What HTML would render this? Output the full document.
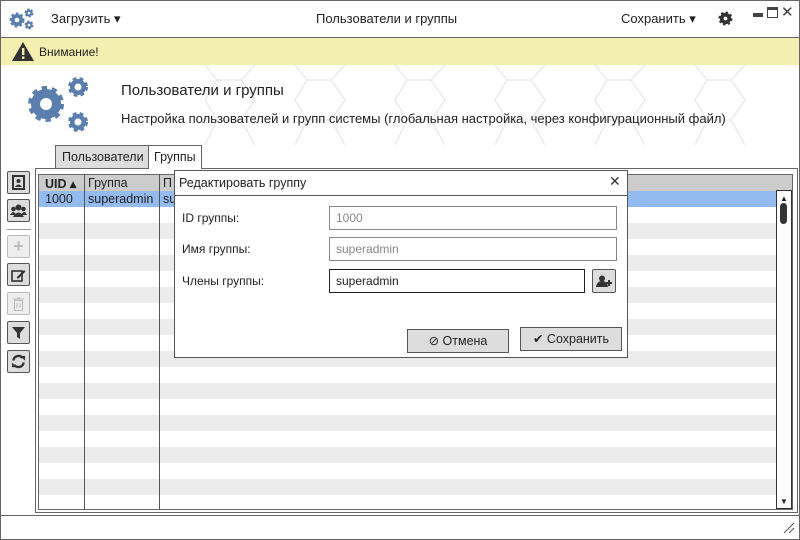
<!DOCTYPE html>
<html><head><meta charset="utf-8"><style>
*{box-sizing:border-box;margin:0;padding:0}
body{width:800px;height:540px;position:relative;background:#fff;font-family:"Liberation Sans",sans-serif;font-size:12px;color:#222;overflow:hidden}
.a{position:absolute}
.btn{position:absolute;left:7px;width:23px;height:23px;border:1px solid #555;border-radius:2px;background:#ddd;display:flex;align-items:center;justify-content:center}
.dis{border-color:#bbb;background:#eee;color:#bbb}
.inp{position:absolute;left:329px;width:288px;height:24px;border:1px solid #888;padding:4px 6px;color:#888;font-size:12px}
.lbl{position:absolute;left:182px;font-size:12px}
</style></head><body>
<div class="a" style="left:0;top:0;width:800px;height:540px;border:1px solid #666"></div>
<svg class="a" style="left:8px;top:7px" width="28" height="24" viewBox="0 0 28 24"><g fill="#5a7fae"><circle cx="9" cy="13" r="6" stroke="#5a7fae" stroke-width="3" stroke-dasharray="2.5 2"/><circle cx="21" cy="6" r="3.5" stroke="#5a7fae" stroke-width="2" stroke-dasharray="2 1.7"/><circle cx="21" cy="18" r="3.5" stroke="#5a7fae" stroke-width="2" stroke-dasharray="2 1.7"/></g><g fill="#fff"><circle cx="9" cy="13" r="2.3"/><circle cx="21" cy="6" r="1.3"/><circle cx="21" cy="18" r="1.3"/></g></svg>
<div class="a" style="left:51px;top:11px;font-size:13px">Загрузить ▾</div>
<div class="a" style="left:316px;top:11px;font-size:13px">Пользователи и группы</div>
<div class="a" style="left:621px;top:11px;font-size:13px">Сохранить ▾</div>
<svg class="a" style="left:718px;top:11px" width="15" height="15" viewBox="0 0 16 16"><circle cx="8" cy="8" r="6" fill="#333" stroke="#333" stroke-width="3" stroke-dasharray="2.4 2.3"/><circle cx="8" cy="8" r="2" fill="#fff"/></svg>
<div class="a" style="left:753px;top:13px;width:10px;height:4px;background:#444"></div>
<div class="a" style="left:767px;top:7px;width:11px;height:11px;border:1px solid #444;border-top-width:3px"></div>
<div class="a" style="left:781px;top:3px;font-size:15px;color:#444">✕</div>
<div class="a" style="left:0;top:37px;width:800px;height:1px;background:#666"></div>
<div class="a" style="left:1px;top:38px;width:798px;height:27px;background:#f3efb0"></div>
<svg class="a" style="left:11px;top:41px" width="24" height="21" viewBox="0 0 24 21"><path d="M12 1L23 20H1Z" fill="#333"/><rect x="11" y="7" width="2.4" height="7" fill="#f3efb0"/><rect x="11" y="15.5" width="2.4" height="2.4" fill="#f3efb0"/></svg>
<div class="a" style="left:39px;top:45px;font-size:12px">Внимание!</div>
<svg class="a" style="left:195px;top:65px" width="605" height="80"><g fill="none" stroke="#e2e2e2" stroke-width="1"><path d="M10 0l12 15-12 20 12 20-12 25M60 0l-14 15 14 20-14 20 14 25M100 0l12 15-12 20 12 20-12 25M150 0l-14 15 14 20-14 20 14 25M200 0l12 15-12 20 12 20-12 25M250 0l-14 15 14 20-14 20 14 25M300 0l12 15-12 20 12 20-12 25M350 0l-14 15 14 20-14 20 14 25M400 0l12 15-12 20 12 20-12 25M450 0l-14 15 14 20-14 20 14 25M500 0l12 15-12 20 12 20-12 25M550 0l-14 15 14 20-14 20 14 25M22 15h24M112 15h24M212 15h24M312 15h24M412 15h24M512 15h24M22 55h24M112 55h24M212 55h24M312 55h24M412 55h24M512 55h24"/></g></svg>
<svg class="a" style="left:26px;top:74px" width="66" height="62" viewBox="0 0 66 62"><g fill="#5a7fae"><circle cx="20" cy="30" r="15" stroke="#5a7fae" stroke-width="6" stroke-dasharray="5 4.5"/><circle cx="52" cy="13" r="8" stroke="#5a7fae" stroke-width="4" stroke-dasharray="3.5 3"/><circle cx="52" cy="48" r="8" stroke="#5a7fae" stroke-width="4" stroke-dasharray="3.5 3"/></g><g fill="#fff"><circle cx="20" cy="30" r="6"/><circle cx="52" cy="13" r="3.5"/><circle cx="52" cy="48" r="3.5"/></g></svg>
<div class="a" style="left:121px;top:82px;font-size:15px">Пользователи и группы</div>
<div class="a" style="left:121px;top:111px;font-size:13px">Настройка пользователей и групп системы (глобальная настройка, через конфигурационный файл)</div>
<div class="a" style="left:55px;top:145px;width:94px;height:24px;background:#ddd;border:1px solid #666;padding:4px 6px;font-size:12.5px">Пользователи</div>
<div class="a" style="left:148px;top:145px;width:54px;height:24px;background:#fff;border:1px solid #666;border-bottom:none;padding:4px 5px;font-size:12.5px">Группы</div>
<div class="a" style="left:35px;top:168px;width:763px;height:345px;border:1px solid #666"></div>
<div class="a" style="left:149px;top:168px;width:52px;height:1px;background:#fff"></div>
<div class="a" style="left:38px;top:174px;width:755px;height:336px;border:1px solid #666;overflow:hidden">
<div style="height:16px;background:#ccc"></div>
<div style="height:16px;background:#93bbf0"></div>
<div style="height:304px;background:repeating-linear-gradient(#fff 0 16px,#ececec 16px 32px)"></div>
</div>
<div class="a" style="left:84px;top:175px;width:1px;height:334px;background:#555"></div>
<div class="a" style="left:159px;top:175px;width:1px;height:334px;background:#555"></div>
<div class="a" style="left:45px;top:176px;font-size:12.5px;font-weight:bold">UID ▴</div>
<div class="a" style="left:88px;top:176px;font-size:12.5px">Группа</div>
<div class="a" style="left:163px;top:176px;font-size:12.5px">П</div>
<div class="a" style="left:45px;top:192px;font-size:12.5px">1000</div>
<div class="a" style="left:88px;top:192px;font-size:12.5px">superadmin</div>
<div class="a" style="left:163px;top:192px;font-size:12.5px">su</div>
<div class="a" style="left:776px;top:190px;width:16px;height:319px;border:1px solid #333;background:#fff"></div>
<div class="a" style="left:780px;top:194px;font-size:8px">▲</div>
<div class="a" style="left:780px;top:203px;width:7px;height:21px;border-radius:4px;background:#333"></div>
<div class="a" style="left:780px;top:497px;font-size:8px">▼</div>
<div class="btn" style="top:171px"><svg width="13" height="15"><rect x="1" y="1" width="11" height="13" fill="none" stroke="#333" stroke-width="2"/><circle cx="6.5" cy="6" r="2" fill="#333"/><path d="M3 12q3.5-5 7 0z" fill="#333"/></svg></div>
<div class="btn" style="top:199px"><svg width="17" height="13"><g fill="#333"><circle cx="8.5" cy="3.5" r="3"/><circle cx="3.5" cy="5" r="2.3"/><circle cx="13.5" cy="5" r="2.3"/><path d="M3 13q5.5-9 11 0zM0 11q3.5-6 6 0zM11 11q3.5-6 6 0z"/></g></svg></div>
<div class="a" style="left:7px;top:229px;width:24px;height:1px;background:#999"></div>
<div class="btn dis" style="top:235px;font-size:18px;font-weight:bold">+</div>
<div class="btn" style="top:263px"><svg width="15" height="14"><rect x="1" y="3" width="10" height="10" fill="none" stroke="#333" stroke-width="1.6"/><path d="M6 9l7-7 1.5 1.5-7 7H6z" fill="#333"/></svg></div>
<div class="btn dis" style="top:292px"><svg width="11" height="14"><rect x="1.5" y="3.5" width="8" height="10" fill="none" stroke="#bbb"/><path d="M0 2h11M4 1h3M4 6v5M7 6v5" stroke="#bbb"/></svg></div>
<div class="btn" style="top:321px"><svg width="13" height="13"><path d="M0 1h13L8 7v6L5 11V7z" fill="#333"/></svg></div>
<div class="btn" style="top:350px"><svg width="15" height="15" viewBox="0 0 16 16"><path d="M2.5 7A5.5 5.5 0 0 1 12.5 4.5M13.5 9A5.5 5.5 0 0 1 3.5 11.5" fill="none" stroke="#333" stroke-width="2.4"/><path d="M10 2h5v5zM6 14H1V9z" fill="#333"/></svg></div>
<div class="a" style="left:0;top:515px;width:800px;height:1px;background:#666"></div>
<svg class="a" style="left:783px;top:522px" width="12" height="12"><path d="M1 11L11 1M6 11L11 6" stroke="#555"/></svg>
<div class="a" style="left:174px;top:170px;width:454px;height:188px;background:#fff;border:1px solid #555"></div>
<div class="a" style="left:174px;top:195px;width:454px;height:1px;background:#555"></div>
<div class="a" style="left:179px;top:176px;font-size:12.5px">Редактировать группу</div>
<div class="a" style="left:609px;top:173px;font-size:14px;color:#333">✕</div>
<div class="lbl" style="top:211px">ID группы:</div>
<div class="lbl" style="top:242px">Имя группы:</div>
<div class="lbl" style="top:274px">Члены группы:</div>
<div class="inp" style="top:206px">1000</div>
<div class="inp" style="top:237px">superadmin</div>
<div class="inp" style="top:269px;width:256px;border-color:#222;color:#222">superadmin</div>
<div class="a" style="left:592px;top:269px;width:24px;height:24px;border:1px solid #555;background:#ddd;border-radius:2px;display:flex;align-items:center;justify-content:center"><svg width="16" height="12"><circle cx="6" cy="3.5" r="3" fill="#333"/><path d="M0 12q1-6 6-6t6 6z" fill="#333"/><path d="M13 5v6M10 8h6" stroke="#333" stroke-width="2"/></svg></div>
<div class="a" style="left:407px;top:329px;width:102px;height:24px;border:1px solid #555;background:#ddd;text-align:center;line-height:22px;font-size:12.5px">⊘ Отмена</div>
<div class="a" style="left:520px;top:327px;width:102px;height:24px;border:1px solid #555;background:#ddd;text-align:center;line-height:22px;font-size:12.5px">✔ Сохранить</div>
</body></html>
